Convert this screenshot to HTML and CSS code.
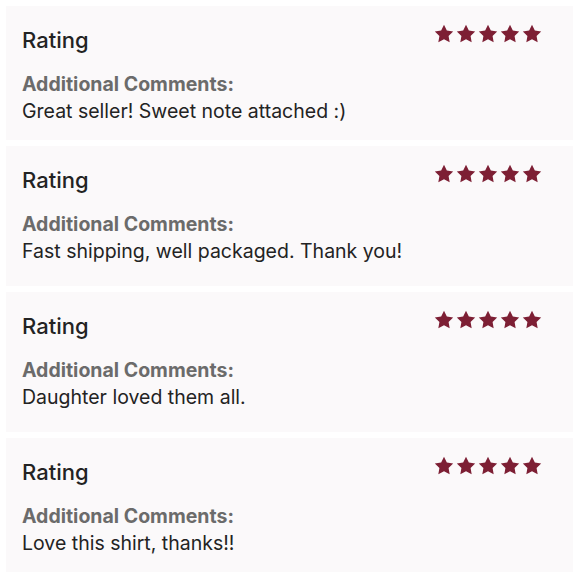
FILE: index.html
```html
<!DOCTYPE html>
<html lang="en">
<head>
    <meta charset="UTF-8">
    <meta name="viewport" content="width=device-width, initial-scale=1.0">
    <title>Seller Reviews</title>
    <link rel="stylesheet" href="styles.css">
</head>
<body>
    <!-- star shape used by every rating row -->
    <svg width="0" height="0" class="defs">
        <defs>
            <path id="star" d="M12 2l3.09 6.26L22 9.27l-5 4.87 1.18 6.88L12 17.77l-6.18 3.25L7 14.14 2 9.27l6.91-1.01L12 2z"/>
        </defs>
    </svg>

    <div class="reviews">
        <div class="review">
            <div class="review-head">
                <h2>Rating</h2>
                <div class="stars">
                    <svg viewBox="0 0 24 24"><use href="#star"/></svg>
                    <svg viewBox="0 0 24 24"><use href="#star"/></svg>
                    <svg viewBox="0 0 24 24"><use href="#star"/></svg>
                    <svg viewBox="0 0 24 24"><use href="#star"/></svg>
                    <svg viewBox="0 0 24 24"><use href="#star"/></svg>
                </div>
            </div>
            <p class="label">Additional Comments:</p>
            <p class="comment">Great seller! Sweet note attached :)</p>
        </div>

        <div class="review tall">
            <div class="review-head">
                <h2>Rating</h2>
                <div class="stars">
                    <svg viewBox="0 0 24 24"><use href="#star"/></svg>
                    <svg viewBox="0 0 24 24"><use href="#star"/></svg>
                    <svg viewBox="0 0 24 24"><use href="#star"/></svg>
                    <svg viewBox="0 0 24 24"><use href="#star"/></svg>
                    <svg viewBox="0 0 24 24"><use href="#star"/></svg>
                </div>
            </div>
            <p class="label">Additional Comments:</p>
            <p class="comment">Fast shipping, well packaged. Thank you!</p>
        </div>

        <div class="review tall">
            <div class="review-head">
                <h2>Rating</h2>
                <div class="stars">
                    <svg viewBox="0 0 24 24"><use href="#star"/></svg>
                    <svg viewBox="0 0 24 24"><use href="#star"/></svg>
                    <svg viewBox="0 0 24 24"><use href="#star"/></svg>
                    <svg viewBox="0 0 24 24"><use href="#star"/></svg>
                    <svg viewBox="0 0 24 24"><use href="#star"/></svg>
                </div>
            </div>
            <p class="label">Additional Comments:</p>
            <p class="comment">Daughter loved them all.</p>
        </div>

        <div class="review">
            <div class="review-head">
                <h2>Rating</h2>
                <div class="stars">
                    <svg viewBox="0 0 24 24"><use href="#star"/></svg>
                    <svg viewBox="0 0 24 24"><use href="#star"/></svg>
                    <svg viewBox="0 0 24 24"><use href="#star"/></svg>
                    <svg viewBox="0 0 24 24"><use href="#star"/></svg>
                    <svg viewBox="0 0 24 24"><use href="#star"/></svg>
                </div>
            </div>
            <p class="label">Additional Comments:</p>
            <p class="comment">Love this shirt, thanks!!</p>
        </div>
    </div>
</body>
</html>
```

FILE: styles.css
```css
body {
    margin: 6px 7px 0 6px;
    background-color: #ffffff;
    font-family: Inter, Lato, sans-serif;
    color: #232323;
}
.defs {
    position: absolute;
}
.reviews {
    display: flex;
    flex-direction: column;
    gap: 6px;
}
.review {
    background-color: #fbf9fa;
    padding: 22px 30px 16px 16px;
    height: 134px;
    box-sizing: border-box;
}
.review.tall {
    height: 140px;
}
.review-head {
    display: flex;
    justify-content: space-between;
    align-items: flex-start;
}
h2 {
    margin: 0;
    font-size: 22px;
    line-height: 24px;
    font-weight: 500;
}
.stars {
    display: flex;
    margin-top: -5px;
}
.stars svg {
    width: 22px;
    height: 22px;
    fill: #7d1f34;
}
.label {
    margin: 19px 0 0 0;
    font-size: 19.5px;
    line-height: 27px;
    font-weight: 700;
    color: #6b6b6b;
}
.comment {
    margin: 0;
    font-size: 19.5px;
    line-height: 27px;
}
```
